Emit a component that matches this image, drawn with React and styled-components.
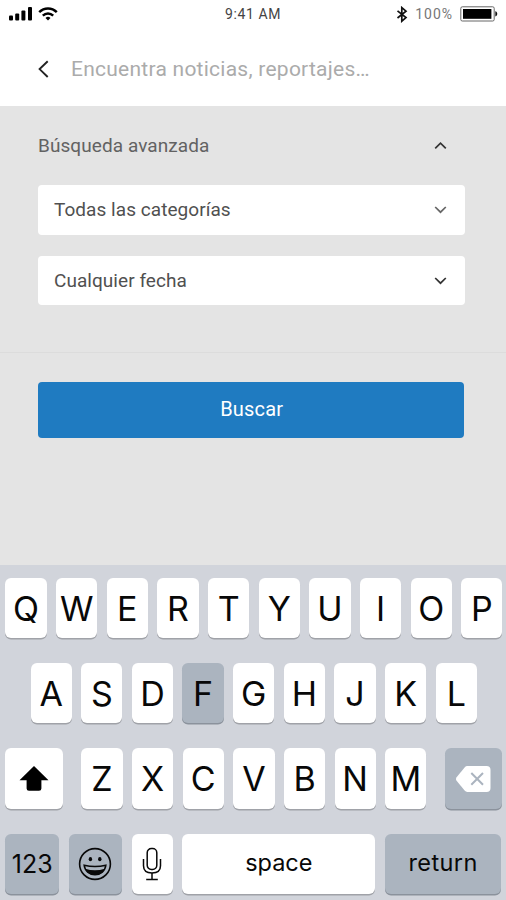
import React from 'react';
import styled, { createGlobalStyle } from 'styled-components';

const GlobalStyle = createGlobalStyle`
  * {
    box-sizing: border-box;
  }

  body {
    margin: 0;
    font-family: Roboto, "Liberation Sans", sans-serif;
  }
`;

const Screen = styled.div`
  width: 506px;
  height: 900px;
  overflow: hidden;
  display: flex;
  flex-direction: column;
  background: #e4e4e4;
`;

const StatusBar = styled.div`
  display: grid;
  grid-template-columns: 1fr auto 1fr;
  align-items: center;
  height: 28px;
  padding: 0 8px;
  background: #fff;
`;

const StatusGroup = styled.div`
  display: flex;
  align-items: center;
  justify-content: ${({ $end }) => ($end ? 'flex-end' : 'flex-start')};
  gap: ${({ $gap }) => $gap}px;
`;

const StatusText = styled.span`
  font-size: 14px;
  line-height: 20px;
  letter-spacing: ${({ $spacing }) => $spacing || 0}px;
  color: ${({ $color }) => $color};
`;

const SearchBar = styled.div`
  display: flex;
  align-items: center;
  gap: 21px;
  height: 78px;
  padding: 4px 37px 0;
  background: #fff;
`;

const Placeholder = styled.span`
  font-size: 21px;
  line-height: 26px;
  letter-spacing: 0.25px;
  color: #ababab;
`;

const Filters = styled.div`
  display: flex;
  flex-direction: column;
  height: 247px;
  padding: 0 41px 0 38px;
  border-bottom: 1px solid #dcdcdc;
`;

const FiltersHeader = styled.div`
  display: flex;
  align-items: center;
  justify-content: space-between;
  height: 79px;
  padding-right: 18px;
  font-size: 19px;
  letter-spacing: 0.08px;
  color: #626262;
`;

const Select = styled.div`
  display: flex;
  align-items: center;
  justify-content: space-between;
  height: 49.5px;
  margin-bottom: 21px;
  padding: 0 18px 0 16px;
  border-radius: 4px;
  background: #fff;
  font-size: 19px;
  letter-spacing: 0.05px;
  color: #505050;
`;

const SubmitButton = styled.button`
  flex: none;
  height: 56px;
  margin: 28.5px 42px 0 37.5px;
  padding: 0 0 2px 2px;
  border: 0;
  border-radius: 4px;
  background: #1f7bc1;
  font-family: inherit;
  font-size: 20px;
  letter-spacing: 0.2px;
  color: #fff;
`;

const Keyboard = styled.div`
  display: flex;
  flex-direction: column;
  gap: 25px;
  height: 335.5px;
  margin-top: auto;
  padding-top: 13px;
  background: #d1d4db;
  font-family: Inter, "Liberation Sans", sans-serif;
`;

const KeyRow = styled.div`
  display: flex;
  gap: 9.35px;
  padding: 0 4px 0 ${({ $inset }) => $inset || 5.4}px;
`;

const Key = styled.div`
  display: flex;
  flex: none;
  align-items: center;
  justify-content: center;
  width: ${({ $width }) => $width || 41.3}px;
  height: 60.4px;
  margin-left: ${({ $shift }) => $shift || 0}px;
  padding-top: 1px;
  padding-bottom: ${({ $raise }) => $raise || 0}px;
  border-radius: 6px;
  background: ${({ $dark }) => ($dark ? '#abb4bf' : '#fff')};
  box-shadow: 0 1.5px 0 ${({ $dark }) => ($dark ? '#8b929c' : '#a0a2a8')};
  font-size: ${({ $size }) => $size || 34}px;
  letter-spacing: ${({ $spacing }) => $spacing || 0}px;
  color: #080808;
`;

const SignalIcon = () => (
  <svg width="25" height="16" viewBox="0 0 25 16">
    <rect x="1" y="9.5" width="4" height="5" rx="1" />
    <rect x="7.2" y="7.5" width="4" height="7" rx="1" />
    <rect x="13.4" y="4.5" width="4" height="10" rx="1" />
    <rect x="20" y="1" width="4" height="13.5" rx="1" />
  </svg>
);

const WifiIcon = () => (
  <svg width="20" height="16" viewBox="0 0 20 16" fill="none" stroke="#000" strokeWidth="2.4">
    <path d="M1.2 6.2C6.2 1.2 13.8 1.2 18.8 6.2" />
    <path d="M4.8 9.7c3-2.9 7.4-2.9 10.4 0" />
    <path d="M7.5 11.9a3.8 3.8 0 0 1 5 0L10 14.6z" fill="#000" stroke="none" />
  </svg>
);

const BluetoothIcon = () => (
  <svg width="12" height="17" viewBox="0 0 12 17" fill="none" stroke="#111" strokeWidth="1.7">
    <path d="M1.5 4.8 10 11.6 5.8 15.2V1.6L10 5.2 1.5 12" />
  </svg>
);

const BatteryIcon = () => (
  <svg width="38" height="16" viewBox="0 0 38 16">
    <rect x="0.8" y="0.8" width="33.4" height="14.2" rx="1.5" fill="none" stroke="#666" strokeWidth="1" />
    <rect x="3" y="3" width="28.4" height="9.8" fill="#000" />
    <path d="M35.3 5.3c2.6.6 2.6 4.6 0 5.2z" fill="#111" />
  </svg>
);

const BackIcon = () => (
  <svg width="13" height="18" viewBox="0 0 13 18" fill="none" stroke="#222" strokeWidth="1.9">
    <path d="M10.7 1.2 2.6 9.1l8.1 7.9" />
  </svg>
);

const Chevron = ({ up, color = '#333' }) => (
  <svg width="13" height="9" viewBox="0 0 13 9" fill="none" stroke={color} strokeWidth="1.7">
    <path d={up ? 'M1.2 7.4 6.5 2.2 11.8 7.4' : 'M1.2 2 6.5 7.2 11.8 2'} />
  </svg>
);

const ShiftIcon = () => (
  <svg width="30" height="27" viewBox="0 0 30 27">
    <path d="M15 1 29.5 15.2H22.4V23.5Q22.4 25.8 20 25.8H10Q7.6 25.8 7.6 23.5V15.2H.5z" />
  </svg>
);

const BackspaceIcon = () => (
  <svg width="35" height="26" viewBox="0 0 35 26">
    <path d="M11.4 0H30.5Q34.5 0 34.5 4V22Q34.5 26 30.5 26H11.4Q9.8 26 8.6 24.6L.6 14.8Q-.6 13 .6 11.2L8.6 1.4Q9.8 0 11.4 0z" fill="#fff" />
    <path d="M15.3 7 27 18.7M27 7 15.3 18.7" stroke="#abb4bf" strokeWidth="2" />
  </svg>
);

const EmojiIcon = () => (
  <svg width="34" height="34" viewBox="0 0 34 34" fill="none" stroke="#080808" strokeWidth="1.6">
    <circle cx="17" cy="17" r="15.4" />
    <ellipse cx="12.4" cy="12.2" rx="1.7" ry="2.1" fill="#080808" stroke="none" />
    <ellipse cx="21.8" cy="12.2" rx="1.7" ry="2.1" fill="#080808" stroke="none" />
    <path d="M6.2 18.3Q17 20.8 27.8 18.3C27.3 24 22.5 27.8 17 27.8S6.7 24 6.2 18.3z" />
    <path d="M7.2 21.7Q17 25 26.8 21.7C25 26 21.4 28 17 28S9 26 7.2 21.7z" fill="#080808" stroke="none" />
  </svg>
);

const MicIcon = () => (
  <svg width="20" height="34" viewBox="0 0 20 34" fill="none" stroke="#080808" strokeWidth="1.5">
    <rect x="5.2" y="1.5" width="9.6" height="21" rx="4.2" />
    <path d="M1.5 12v6.7c0 4.5 3.3 7.2 8.5 7.2s8.5-2.7 8.5-7.2V12" />
    <path d="M10 26v6.2M4.2 32.5h11.6" />
  </svg>
);

const firstRow = ['Q', 'W', 'E', 'R', 'T', 'Y', 'U', 'I', 'O', 'P'];
const secondRow = ['A', 'S', 'D', 'F', 'G', 'H', 'J', 'K', 'L'];
const thirdRow = ['Z', 'X', 'C', 'V', 'B', 'N', 'M'];

const App = () => (
  <>
    <GlobalStyle />
    <Screen>
      <StatusBar>
        <StatusGroup $gap={5}>
          <SignalIcon />
          <WifiIcon />
        </StatusGroup>
        <StatusText $color="#444" $spacing={0.6}>9:41 AM</StatusText>
        <StatusGroup $end $gap={7}>
          <BluetoothIcon />
          <StatusText $color="#777" $spacing={1}>100%</StatusText>
          <BatteryIcon />
        </StatusGroup>
      </StatusBar>
      <SearchBar>
        <BackIcon />
        <Placeholder>Encuentra noticias, reportajes…</Placeholder>
      </SearchBar>
      <Filters>
        <FiltersHeader>
          Búsqueda avanzada
          <Chevron up />
        </FiltersHeader>
        <Select>
          Todas las categorías
          <Chevron color="#666" />
        </Select>
        <Select>
          Cualquier fecha
          <Chevron />
        </Select>
      </Filters>
      <SubmitButton>Buscar</SubmitButton>
      <Keyboard>
        <KeyRow>
          {firstRow.map((letter) => (
            <Key key={letter}>{letter}</Key>
          ))}
        </KeyRow>
        <KeyRow $inset={30.5}>
          {secondRow.map((letter) => (
            <Key key={letter} $dark={letter === 'F'}>{letter}</Key>
          ))}
        </KeyRow>
        <KeyRow>
          <Key $width={57.3}><ShiftIcon /></Key>
          {thirdRow.map((letter, index) => (
            <Key key={letter} $shift={index === 0 ? 9.3 : 0}>{letter}</Key>
          ))}
          <Key $dark $width={56.8} $shift={9.3}><BackspaceIcon /></Key>
        </KeyRow>
        <KeyRow>
          <Key $dark $width={53.8} $size={25}>123</Key>
          <Key $dark $width={53.8}><EmojiIcon /></Key>
          <Key><MicIcon /></Key>
          <Key $width={193} $size={23.5} $raise={3}>space</Key>
          <Key $dark $width={116.8} $size={23.5} $raise={3} $spacing={0.4}>return</Key>
        </KeyRow>
      </Keyboard>
    </Screen>
  </>
);

export default App;
